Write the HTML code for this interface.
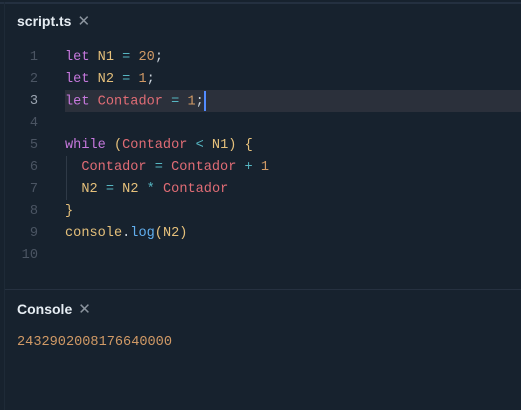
<!DOCTYPE html>
<html><head><style>
html,body{margin:0;padding:0;background:#17222e;width:521px;height:410px;overflow:hidden;position:relative;font-family:"Liberation Sans",sans-serif}
.top{position:absolute;left:0;top:2px;width:521px;height:2px;background:#243040}
.left{position:absolute;left:4px;top:2px;width:1px;height:408px;background:#1e2a37}
.tab{position:absolute;left:17px;font-weight:bold;font-size:14px;color:#e6edf3}
.x{color:#8b949e;font-weight:normal;font-size:15px;margin-left:6px}
.code{position:absolute;left:0;top:47px;font-family:"Liberation Mono",monospace;font-size:13.6px}
.ln{position:absolute;height:22px;line-height:22px;width:521px}
.n{position:absolute;width:38px;text-align:right;color:#4b5563}
.t{position:absolute;left:65px;white-space:pre}
.hl{position:absolute;left:65px;top:90px;width:456px;height:22px;background:#2b303b}
.k{color:#c678dd}.v{color:#e5c07b}.o{color:#56b6c2}.num{color:#d19a66}.r{color:#e06c75}.f{color:#61afef}.p{color:#e5c07b}.w{color:#c9d1d9}
.cur{display:inline-block;width:2px;height:20px;background:#528bff;vertical-align:middle}
.guide{position:absolute;left:66px;top:156px;width:1px;height:44px;background:#2f3a47}
.div{position:absolute;left:5px;top:289px;width:516px;height:1px;background:#263140}
.out{position:absolute;left:17px;top:335px;font-family:"Liberation Mono",monospace;font-size:13.6px;color:#d19a66}
</style></head><body>
<div class="top"></div><div class="left"></div>
<div class="tab" style="top:12px">script.ts<span class="x">✕</span></div>
<div class="hl"></div>
<div class="guide"></div>
<div class="code">
<div class="ln" style="top:0"><span class="n">1</span><span class="t"><span class="k">let</span> <span class="v">N1</span> <span class="o">=</span> <span class="num">20</span><span class="w">;</span></span></div>
<div class="ln" style="top:22px"><span class="n">2</span><span class="t"><span class="k">let</span> <span class="v">N2</span> <span class="o">=</span> <span class="num">1</span><span class="w">;</span></span></div>
<div class="ln" style="top:44px"><span class="n" style="color:#9aa4b0">3</span><span class="t"><span class="k">let</span> <span class="r">Contador</span> <span class="o">=</span> <span class="num">1</span><span class="w">;</span><span class="cur"></span></span></div>
<div class="ln" style="top:66px"><span class="n">4</span></div>
<div class="ln" style="top:88px"><span class="n">5</span><span class="t"><span class="k">while</span> <span class="p">(</span><span class="r">Contador</span> <span class="o">&lt;</span> <span class="v">N1</span><span class="p">)</span> <span class="p">{</span></span></div>
<div class="ln" style="top:110px"><span class="n">6</span><span class="t">  <span class="r">Contador</span> <span class="o">=</span> <span class="r">Contador</span> <span class="o">+</span> <span class="num">1</span></span></div>
<div class="ln" style="top:132px"><span class="n">7</span><span class="t">  <span class="v">N2</span> <span class="o">=</span> <span class="v">N2</span> <span class="o">*</span> <span class="r">Contador</span></span></div>
<div class="ln" style="top:154px"><span class="n">8</span><span class="t"><span class="p">}</span></span></div>
<div class="ln" style="top:176px"><span class="n">9</span><span class="t"><span class="v">console</span><span class="w">.</span><span class="f">log</span><span class="p">(</span><span class="v">N2</span><span class="p">)</span></span></div>
<div class="ln" style="top:198px"><span class="n">10</span></div>
</div>
<div class="div"></div>
<div class="tab" style="top:300px">Console<span class="x">✕</span></div>
<div class="out">2432902008176640000</div>
</body></html>
